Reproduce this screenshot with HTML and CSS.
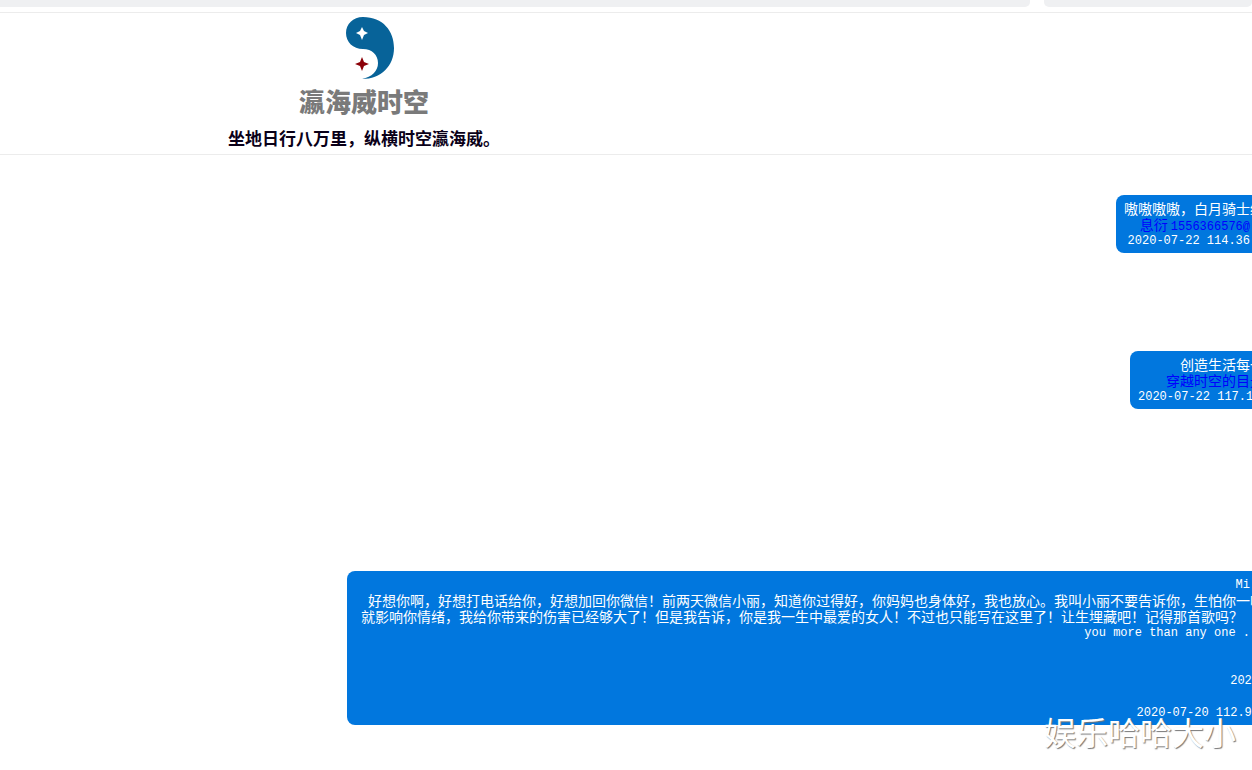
FILE: index.html
```html
<!DOCTYPE html>
<html lang="zh-CN">

<head>
  <meta charset="UTF-8">
  <meta name="viewport" content="width=device-width, initial-scale=1.0">
  <title>瀛海威时空</title>
  <link rel="stylesheet" href="styles.css">
</head>

<body>
  <div class="tabs">
    <div class="tab tab-main"></div>
    <div class="tab tab-side"></div>
  </div>

  <header class="header">
    <div class="brand">
      <svg class="logo" viewBox="0 0 48 62" aria-hidden="true">
        <path fill="#076399" d="M17 0C37 0 48 14 48 31C48 49 35 62 16 62C26 60 32 54 32 46C32 38 26 32 17 32C7 32 0 25 0 16C0 7 7 0 17 0Z" />
        <path fill="#fff" d="M16 10L18 14L22 16L18 18L16 23L14 18L10 16L14 14Z" />
        <path fill="#8b0008" d="M16 40L18 45L23 47L18 49L16 54L14 49L9 47L14 45Z" />
      </svg>
      <div class="brand-name">瀛海威时空</div>
      <h1 class="slogan">坐地日行八万里，纵横时空瀛海威。</h1>
    </div>
  </header>

  <main class="messages">
    <div class="message message-first">
      <p class="run-on">嗷嗷嗷嗷，白月骑士终</p>
      <p><a href="#">息衍 <span class="latin">1556366576@</span></a></p>
      <p class="latin">2020-07-22 114.36</p>
    </div>

    <div class="message message-second">
      <p class="run-on">创造生活每一</p>
      <p class="run-on"><a href="#">穿越时空的目光</a></p>
      <p class="latin">2020-07-22 117.1</p>
    </div>

    <div class="message message-long">
      <p class="latin">Mi</p>
      <p class="run-on">好想你啊，好想打电话给你，好想加回你微信！前两天微信小丽，知道你过得好，你妈妈也身体好，我也放心。我叫小丽不要告诉你，生怕你一听</p>
      <p class="short">就影响你情绪，我给你带来的伤害已经够大了！但是我告诉，你是我一生中最爱的女人！不过也只能写在这里了！让生埋藏吧！记得那首歌吗？</p>
      <p class="latin">you more than any one .</p>
      <br>
      <br>
      <p class="latin run-on-latin">2020</p>
      <br>
      <p class="latin run-on-latin">2020-07-20 112.90</p>
    </div>
  </main>

  <div class="watermark">娱乐哈哈大小</div>
</body>

</html>
```

FILE: styles.css
```css
body {
  margin: 0;
  min-height: 100vh;
  position: relative;
  overflow: hidden;
  background-color: #fff;
  font-family: "Noto Sans CJK SC", sans-serif;
  font-size: 14px;
  line-height: 16px;
}

p,
h1 {
  margin: 0;
}

.tabs {
  display: flex;
  gap: 14px;
  height: 12px;
  border-bottom: 1px solid #ececec;
}

.tab {
  height: 7px;
  background-color: #eff0f2;
}

.tab-main {
  flex: 1;
  border-radius: 0 0 5px 0;
}

.tab-side {
  width: 208px;
  border-radius: 0 0 5px 5px;
}

.header {
  padding: 4px 0 4px 228px;
  border-bottom: 1px solid #ececec;
}

.brand {
  display: inline-flex;
  flex-direction: column;
  align-items: center;
}

.logo {
  width: 48px;
  height: 62px;
  margin-left: 12px;
}

.brand-name {
  margin-top: 7px;
  font-size: 26px;
  line-height: 30px;
  font-weight: 900;
  color: #7a7a7a;
}

.slogan {
  margin-top: 10px;
  font-size: 17px;
  line-height: 24px;
  font-weight: bold;
  color: #0a0018;
}

.messages {
  display: flex;
  flex-direction: column;
  align-items: flex-end;
  padding-top: 40px;
}

.message {
  box-sizing: border-box;
  padding: 5px 2px 5px 8px;
  border-radius: 8px 0 0 8px;
  background-color: #0177de;
  color: #fff;
  text-align: right;
  white-space: nowrap;
  overflow: hidden;
}

.message p {
  height: 16px;
}

.message a {
  color: #00f;
  text-decoration: none;
}

.message-first {
  width: 136px;
  margin-bottom: 98px;
}

.message-second {
  width: 122px;
  margin-bottom: 162px;
}

.message-long {
  width: 905px;
}

/* lines that continue past the right edge */
.message .run-on {
  margin-right: -14px;
}

.message .run-on-latin {
  margin-right: -9px;
}

.message .short {
  padding-right: 7px;
}

.latin {
  font-family: "Liberation Mono", monospace;
  font-size: 12px;
}

p.latin {
  line-height: 18px;
}

.watermark {
  position: absolute;
  right: 16px;
  bottom: 19px;
  font-size: 32px;
  line-height: 40px;
  color: #fff;
  text-shadow: 1px 1px 1px #777;
}
```
